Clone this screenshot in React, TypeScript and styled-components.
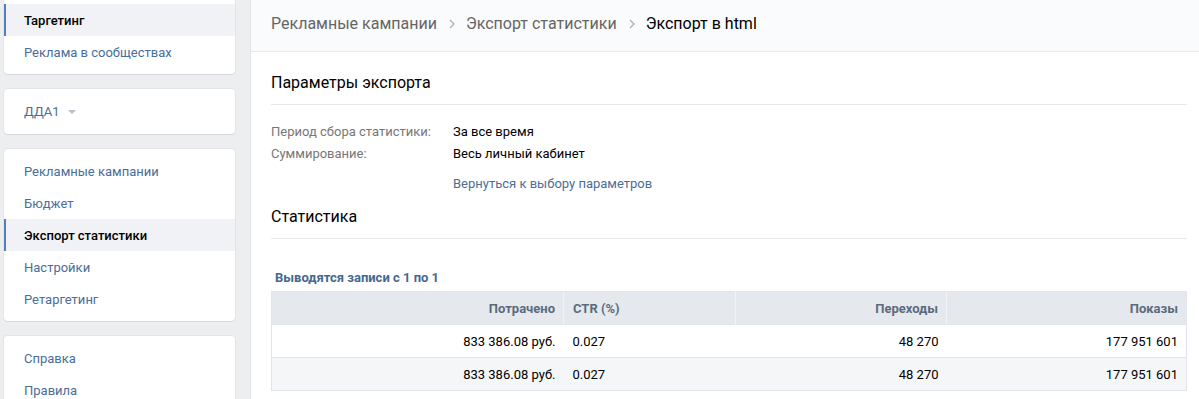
import React from "react";
import styled, { createGlobalStyle } from "styled-components";

const GlobalStyle = createGlobalStyle`
  html, body {
    margin: 0;
    padding: 0;
    background: #edeef0;
    overflow: hidden;
  }
  body {
    font-family: Roboto, "Open Sans", Arial, sans-serif;
    font-size: 13px;
    color: #000;
  }
`;

const Layout = styled.div`
  display: flex;
  align-items: flex-start;
  gap: 16px;
  padding-left: 4px;
  height: 399px;
`;

const Sidebar = styled.div`
  width: 231px;
  flex-shrink: 0;
  margin-top: -2px;
  display: flex;
  flex-direction: column;
  gap: 15px;
`;

const Card = styled.div`
  background: #fff;
  border-radius: 4px;
  box-shadow: 0 1px 0 0 #d7d8db, 0 0 0 1px #e3e4e8;
  padding: 6px 0;
`;

const MenuItem = styled.div<{ active?: boolean }>`
  height: 32px;
  display: flex;
  align-items: center;
  padding-left: ${(p) => (p.active ? "18px" : "20px")};
  border-left: ${(p) => (p.active ? "2px solid #5181b8" : "none")};
  background: ${(p) => (p.active ? "#f0f2f5" : "transparent")};
  color: ${(p) => (p.active ? "#000" : "#4a6e97")};
  font-weight: ${(p) => (p.active ? 500 : 400)};
  white-space: nowrap;
`;

const AccountCard = styled(Card)`
  padding: 0;
  height: 45px;
  display: flex;
  align-items: center;
  padding-left: 20px;
  color: #4a6e97;
`;

const Caret = styled.span`
  display: inline-block;
  margin-left: 8px;
  margin-top: 1px;
  border-left: 4px solid transparent;
  border-right: 4px solid transparent;
  border-top: 4px solid #b5bfca;
`;

const Main = styled.div`
  flex: 1;
  height: 420px;
  background: #fff;
  box-shadow: 0 1px 0 0 #d7d8db, 0 0 0 1px #e3e4e8;
`;

const Header = styled.div`
  height: 52px;
  padding: 0 20px;
  display: flex;
  align-items: center;
  padding-bottom: 4px;
  box-sizing: border-box;
  background: #fafbfc;
  border-bottom: 1px solid #e7e8ec;
  font-size: 16px;
  color: #656565;
`;

const Crumb = styled.span<{ current?: boolean }>`
  color: ${(p) => (p.current ? "#000" : "#656565")};
`;

const Sep = styled.svg`
  margin: 0 11px 0 12px;
`;

const Content = styled.div`
  padding: 0 12px 0 20px;
`;

const SectionTitle = styled.div<{ top: number }>`
  font-size: 16px;
  line-height: 20px;
  padding: ${(p) => p.top}px 0 11px;
  border-bottom: 1px solid #e7e8ec;
`;

const Params = styled.div`
  display: grid;
  grid-template-columns: 182px auto;
  margin-top: 16px;
  line-height: 22px;
`;

const Label = styled.div`
  color: #777;
`;

const BackLink = styled.a`
  grid-column: 2;
  margin-top: 8px;
  color: #4a6e97;
  text-decoration: none;
`;

const Summary = styled.div`
  margin-top: 31px;
  margin-bottom: 5px;
  padding-left: 4px;
  line-height: 16px;
  font-weight: 700;
  color: #45688e;
`;

const Table = styled.table`
  width: 915px;
  border-collapse: collapse;
  border: 1px solid #e1e5eb;
  table-layout: fixed;
`;

const Th = styled.th<{ align: "left" | "right" }>`
  height: 32px;
  padding: ${(p) => (p.align === "right" ? "0 8px 0 0" : "0 0 0 9px")};
  background: #e5e9ee;
  color: #5b6b7d;
  font-weight: 700;
  text-align: ${(p) => p.align};
  border-left: 1px solid #f0f2f5;
  &:first-child {
    border-left: none;
  }
`;

const Tr = styled.tr<{ striped?: boolean }>`
  background: ${(p) => (p.striped ? "#f5f6f8" : "#fff")};
  border-top: 1px solid #e1e5eb;
`;

const Td = styled.td<{ align: "left" | "right" }>`
  height: 32px;
  padding: ${(p) => (p.align === "right" ? "0 8px 0 0" : "0 0 0 9px")};
  text-align: ${(p) => p.align};
`;

const columns: { title: string; width: number; align: "left" | "right" }[] = [
  { title: "Потрачено", width: 292, align: "right" },
  { title: "CTR (%)", width: 172, align: "left" },
  { title: "Переходы", width: 211, align: "right" },
  { title: "Показы", width: 240, align: "right" },
];

const rows = [
  ["833 386.08 руб.", "0.027", "48 270", "177 951 601"],
  ["833 386.08 руб.", "0.027", "48 270", "177 951 601"],
];

function Chevron() {
  return (
    <Sep width="6" height="10" viewBox="0 0 6 10">
      <path d="M1 1l4 4-4 4" fill="none" stroke="#a5adb7" strokeWidth="1.2" />
    </Sep>
  );
}

export default function App() {
  return (
    <>
      <GlobalStyle />
      <Layout>
        <Sidebar>
          <Card>
            <MenuItem active>Таргетинг</MenuItem>
            <MenuItem>Реклама в сообществах</MenuItem>
          </Card>
          <AccountCard>
            ДДА1
            <Caret />
          </AccountCard>
          <Card>
            <MenuItem>Рекламные кампании</MenuItem>
            <MenuItem>Бюджет</MenuItem>
            <MenuItem active>Экспорт статистики</MenuItem>
            <MenuItem>Настройки</MenuItem>
            <MenuItem>Ретаргетинг</MenuItem>
          </Card>
          <Card>
            <MenuItem>Справка</MenuItem>
            <MenuItem>Правила</MenuItem>
          </Card>
        </Sidebar>
        <Main>
          <Header>
            <Crumb>Рекламные кампании</Crumb>
            <Chevron />
            <Crumb>Экспорт статистики</Crumb>
            <Chevron />
            <Crumb current>Экспорт в html</Crumb>
          </Header>
          <Content>
            <SectionTitle top={21}>Параметры экспорта</SectionTitle>
            <Params>
              <Label>Период сбора статистики:</Label>
              <div>За все время</div>
              <Label>Суммирование:</Label>
              <div>Весь личный кабинет</div>
              <BackLink href="#">Вернуться к выбору параметров</BackLink>
            </Params>
            <SectionTitle top={12}>Статистика</SectionTitle>
            <Summary>Выводятся записи с 1 по 1</Summary>
            <Table>
              <colgroup>
                {columns.map((c) => (
                  <col key={c.title} style={{ width: c.width }} />
                ))}
              </colgroup>
              <thead>
                <tr>
                  {columns.map((c) => (
                    <Th key={c.title} align={c.align}>
                      {c.title}
                    </Th>
                  ))}
                </tr>
              </thead>
              <tbody>
                {rows.map((r, i) => (
                  <Tr key={i} striped={i % 2 === 1}>
                    {r.map((v, j) => (
                      <Td key={j} align={columns[j].align}>
                        {v}
                      </Td>
                    ))}
                  </Tr>
                ))}
              </tbody>
            </Table>
          </Content>
        </Main>
      </Layout>
    </>
  );
}
